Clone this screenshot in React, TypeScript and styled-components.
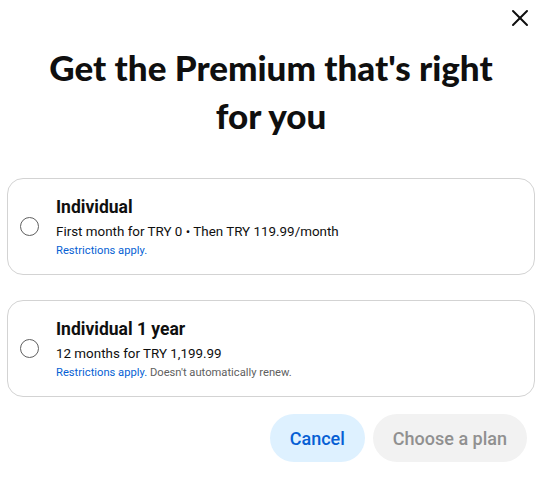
import React, { useState } from 'react';
import styled, { createGlobalStyle } from 'styled-components';
import { X } from 'lucide-react';

const GlobalStyle = createGlobalStyle`
  body {
    margin: 0;
    background: #ffffff;
    font-family: Roboto, "Liberation Sans", sans-serif;
    color: #0f0f0f;
  }
`;

interface Plan {
  id: string
  name: string
  price: string
  note?: string
}

const plans: Plan[] = [
  { id: 'monthly', name: 'Individual', price: 'First month for TRY 0 • Then TRY 119.99/month' },
  { id: 'yearly', name: 'Individual 1 year', price: '12 months for TRY 1,199.99', note: "Doesn't automatically renew." },
];

const Dialog = styled.div`
  width: 543px;
  height: 493px;
  box-sizing: border-box;
  padding: 4px 8px 0 7px;
  display: flex;
  flex-direction: column;
`;

const Header = styled.div`
  display: flex;
  justify-content: flex-end;
  height: 28px;
  padding-right: 1px;
`;

const CloseButton = styled.button`
  border: none;
  background: none;
  padding: 0;
  width: 28px;
  height: 28px;
  display: flex;
  align-items: center;
  justify-content: center;
  color: #0f0f0f;
  cursor: pointer;
`;

const Title = styled.h1`
  margin: 11px 20px 0;
  font-family: Lato, "Open Sans", sans-serif;
  font-weight: 900;
  font-size: 35px;
  line-height: 48px;
  text-align: center;
  color: #0f0f0f;
`;

const PlanList = styled.div`
  display: flex;
  flex-direction: column;
  gap: 25px;
  margin-top: 39px;
`;

const Card = styled.label<{ $selected: boolean }>`
  display: flex;
  align-items: center;
  height: 97px;
  box-sizing: border-box;
  border: 1px solid ${p => (p.$selected ? '#065fd4' : '#d3d3d3')};
  border-radius: 16px;
  padding: 0 0 0 12px;
  cursor: pointer;
`;

const Radio = styled.span<{ $selected: boolean }>`
  width: 19px;
  height: 19px;
  box-sizing: border-box;
  border-radius: 50%;
  border: 1.5px solid ${p => (p.$selected ? '#065fd4' : '#606060')};
  flex-shrink: 0;
  margin-right: 17px;
`;

const PlanText = styled.div`
  display: flex;
  flex-direction: column;
`;

const PlanName = styled.div`
  font-size: 17.5px;
  font-weight: 700;
  line-height: 24px;
  color: #0f0f0f;
`;

const PlanPrice = styled.div`
  margin-top: 3px;
  font-size: 13.4px;
  line-height: 20px;
  color: #0f0f0f;
`;

const PlanNote = styled.div`
  margin-top: 1px;
  font-size: 11.2px;
  line-height: 16px;
  color: #606060;
`;

const Restrictions = styled.a`
  color: #065fd4;
  text-decoration: none;
`;

const Actions = styled.div`
  display: flex;
  justify-content: flex-end;
  gap: 8px;
  margin-top: 17px;
  padding-right: 8px;
`;

const Pill = styled.button<{ $variant: 'cancel' | 'disabled' }>`
  height: 48px;
  border: none;
  border-radius: 24px;
  padding: 0 20px;
  font-family: Roboto, "Liberation Sans", sans-serif;
  font-size: 18px;
  font-weight: 500;
  background: ${p => (p.$variant === 'cancel' ? '#def1ff' : '#f2f2f2')};
  color: ${p => (p.$variant === 'cancel' ? '#065fd4' : '#909090')};
  cursor: ${p => (p.$variant === 'cancel' ? 'pointer' : 'default')};
`;

const App = () => {
  const [selected, setSelected] = useState<string | null>(null);

  return (
    <Dialog>
      <GlobalStyle />
      <Header>
        <CloseButton aria-label="Close">
          <X size={28} strokeWidth={1.7} />
        </CloseButton>
      </Header>
      <Title>Get the Premium that's right for you</Title>
      <PlanList>
        {plans.map(plan => (
          <Card key={plan.id} $selected={selected === plan.id} onClick={() => setSelected(plan.id)}>
            <Radio $selected={selected === plan.id} />
            <PlanText>
              <PlanName>{plan.name}</PlanName>
              <PlanPrice>{plan.price}</PlanPrice>
              <PlanNote>
                <Restrictions href="#">Restrictions apply.</Restrictions>
                {plan.note ? ` ${plan.note}` : ''}
              </PlanNote>
            </PlanText>
          </Card>
        ))}
      </PlanList>
      <Actions>
        <Pill $variant="cancel">Cancel</Pill>
        <Pill $variant="disabled" disabled>Choose a plan</Pill>
      </Actions>
    </Dialog>
  );
};

export default App;
